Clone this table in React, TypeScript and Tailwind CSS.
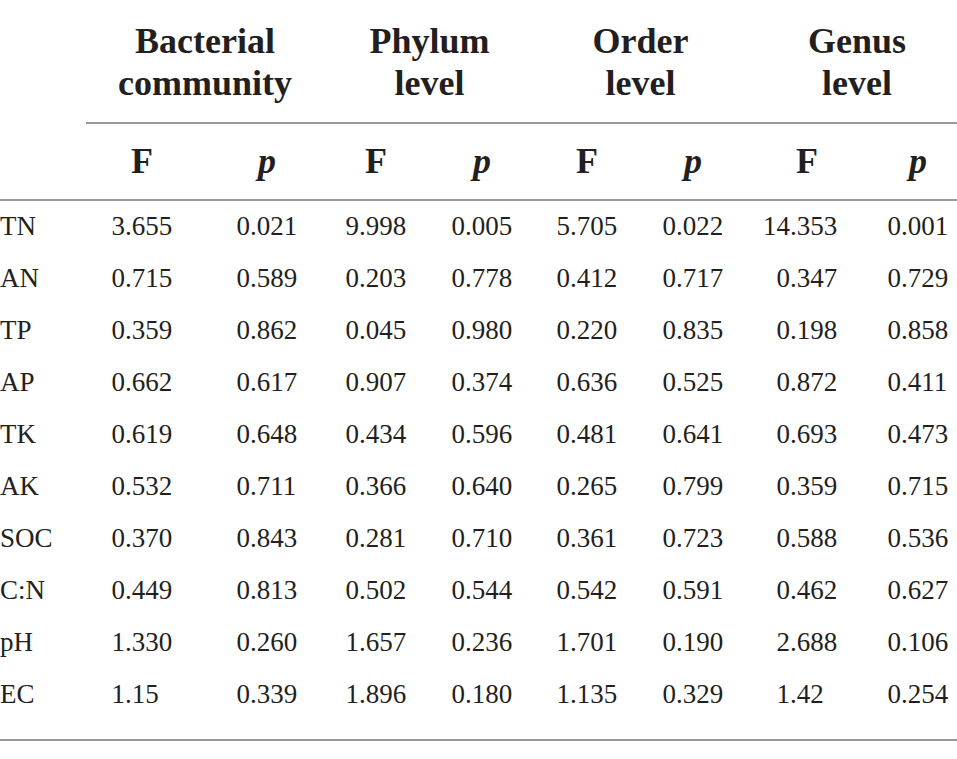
import React from "react";

const rows: string[][] = [
  ["TN", "3.655", "0.021", "9.998", "0.005", "5.705", "0.022", "14.353", "0.001"],
  ["AN", "0.715", "0.589", "0.203", "0.778", "0.412", "0.717", "0.347", "0.729"],
  ["TP", "0.359", "0.862", "0.045", "0.980", "0.220", "0.835", "0.198", "0.858"],
  ["AP", "0.662", "0.617", "0.907", "0.374", "0.636", "0.525", "0.872", "0.411"],
  ["TK", "0.619", "0.648", "0.434", "0.596", "0.481", "0.641", "0.693", "0.473"],
  ["AK", "0.532", "0.711", "0.366", "0.640", "0.265", "0.799", "0.359", "0.715"],
  ["SOC", "0.370", "0.843", "0.281", "0.710", "0.361", "0.723", "0.588", "0.536"],
  ["C:N", "0.449", "0.813", "0.502", "0.544", "0.542", "0.591", "0.462", "0.627"],
  ["pH", "1.330", "0.260", "1.657", "0.236", "1.701", "0.190", "2.688", "0.106"],
  ["EC", "1.15", "0.339", "1.896", "0.180", "1.135", "0.329", "1.42", "0.254"],
];

const groups: { top: string; bottom: string; w: string }[] = [
  { top: "Bacterial", bottom: "community", w: "w-[188px]" },
  { top: "Phylum", bottom: "level", w: "w-[169px]" },
  { top: "Order", bottom: "level", w: "w-[169px]" },
  { top: "Genus", bottom: "level", w: "w-[162px]" },
];

const GRID =
  "grid grid-cols-[97px_125px_109px_106px_105px_106px_114px_111px_84px]";

function Num({ v }: { v: string }) {
  const [i, f] = v.split(".");
  return (
    <div className="flex whitespace-nowrap">
      <span className="w-[28px] text-right">{i}</span>
      <span>.{f}</span>
    </div>
  );
}

export default function App() {
  return (
    <div
      className="w-[957px] h-[759px] bg-white text-[#231f20] overflow-hidden"
      style={{ fontFamily: '"Liberation Serif", "Times New Roman", serif' }}
    >
      {/* group headings */}
      <div className={`${GRID} pt-[20px] pb-[18px]`}>
        <div />
        {groups.map((g) => (
          <div key={g.top} className="col-span-2 pl-[14px]">
            <div
              className={`${g.w} text-center font-bold text-[36px] leading-[42px]`}
            >
              <div>{g.top}</div>
              <div>{g.bottom}</div>
            </div>
          </div>
        ))}
      </div>
      <div className="ml-[86px] h-[2px] bg-[#999999]" />

      {/* F / p row */}
      <div className={`${GRID} pt-[16px] pb-[17px]`}>
        <div />
        {[0, 1, 2, 3].map((k) => (
          <React.Fragment key={k}>
            <div className="pl-[14px]">
              <div className="w-[62px] text-center font-bold text-[36px] leading-[42px]">
                F
              </div>
            </div>
            <div className="pl-[14px]">
              <div className="w-[62px] text-center font-bold italic text-[36px] leading-[42px]">
                p
              </div>
            </div>
          </React.Fragment>
        ))}
      </div>
      <div className="h-[2px] bg-[#999999]" />

      {/* body */}
      <div className="pb-[18px]">
        {rows.map((r) => (
          <div key={r[0]} className={`${GRID} h-[52px] text-[27px] leading-[50px]`}>
            <div>{r[0]}</div>
            {r.slice(1).map((v, j) => (
              <Num key={j} v={v} />
            ))}
          </div>
        ))}
      </div>
      <div className="h-[2px] bg-[#999999]" />
    </div>
  );
}
